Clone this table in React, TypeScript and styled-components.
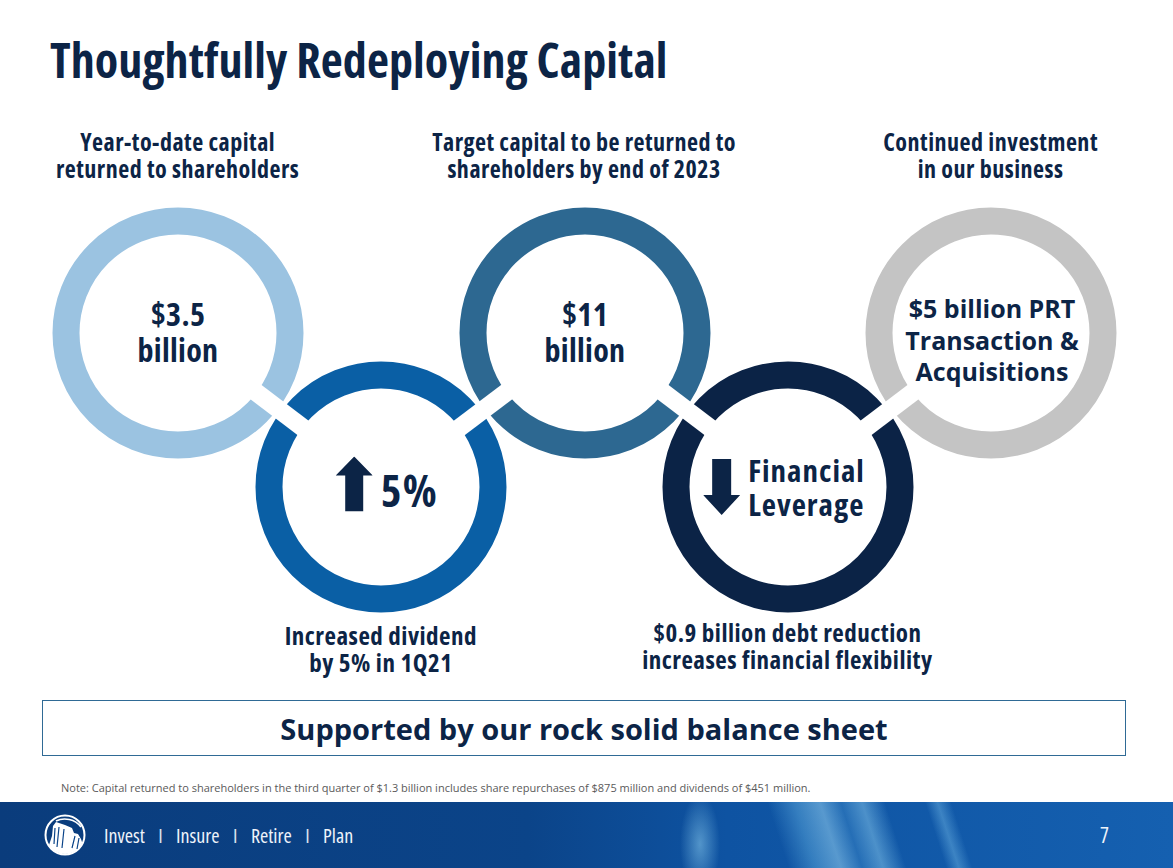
import React from 'react';
import styled, { createGlobalStyle } from 'styled-components';

const FONT = '"Open Sans", "DejaVu Sans Condensed", "Liberation Sans", sans-serif';
const NAVY = '#0c2446';

const GlobalStyle = createGlobalStyle`
  html, body {
    margin: 0;
    padding: 0;
    background: #ffffff;
  }
  body {
    font-family: ${FONT};
    font-stretch: 75%;
    font-variant-ligatures: none;
    color: ${NAVY};
  }
`;

// ring centres, in diagram coordinates (diagram starts at y = 203)
const rings = [
  { cx: 178, cy: 129, color: '#9bc3e1' },
  { cx: 381, cy: 283, color: '#0a5fa5' },
  { cx: 585, cy: 129, color: '#2d6891' },
  { cx: 788, cy: 283, color: '#0b2346' },
  { cx: 991, cy: 129, color: '#c4c4c4' },
];

const Page = styled.div`
  width: 1173px;
  height: 868px;
  display: flex;
  flex-direction: column;
  overflow: hidden;
`;

const Title = styled.h1`
  margin: 36px 0 0 0;
  padding-left: 50px;
  font-size: 48px;
  line-height: 48px;
  font-weight: 700;
  letter-spacing: 0.1px;
`;

const CaptionRow = styled.div<{ $top: number; $size: number }>`
  display: grid;
  grid-template-columns: repeat(5, 203.25px);
  padding-left: 76px;
  margin-top: ${(p) => p.$top}px;
  font-size: ${(p) => p.$size}px;
`;

const Caption = styled.div<{ $col: number; $shift?: number }>`
  grid-column: ${(p) => p.$col};
  grid-row: 1;
  display: flex;
  flex-direction: column;
  align-items: center;
  margin-top: ${(p) => p.$shift ?? 0}px;
  line-height: 27px;
  font-weight: 700;
  letter-spacing: 0.5px;
  white-space: nowrap;
  text-align: center;
`;

const Diagram = styled.div`
  position: relative;
  height: 410px;
  margin-top: 22px;
  flex-shrink: 0;
`;

const Rings = styled.svg`
  position: absolute;
  left: 0;
  top: 0;
`;

const Node = styled.div`
  position: absolute;
  transform: translate(-50%, -50%);
  display: flex;
  align-items: center;
  gap: 8px;
  white-space: nowrap;
`;

const Value = styled.div<{ $size: number; $lh: number; $stretch?: number; $track?: number }>`
  font-size: ${(p) => p.$size}px;
  line-height: ${(p) => p.$lh}px;
  font-stretch: ${(p) => p.$stretch ?? 75}%;
  letter-spacing: ${(p) => p.$track ?? 0}px;
  font-weight: 700;
  text-align: center;
`;

const LeftValue = styled(Value)`
  text-align: left;
`;

const Box = styled.div`
  margin: 24px 47px 0 42px;
  height: 54px;
  border: 1.5px solid #2f6a95;
  display: flex;
  align-items: center;
  justify-content: center;
  font-size: 29px;
  font-weight: 700;
  font-stretch: 88%;
`;

const Note = styled.div`
  margin-top: 25px;
  padding-left: 61px;
  font-size: 11px;
  line-height: 14px;
  font-stretch: 100%;
  color: #5a5a5a;
`;

const Footer = styled.footer`
  margin-top: auto;
  height: 66px;
  flex-shrink: 0;
  display: flex;
  align-items: center;
  padding: 0 64px 0 44px;
  color: #eef3fa;
  background:
    radial-gradient(ellipse 20px 50px at 700px 42px, rgba(150, 215, 245, 0.5), rgba(150, 215, 245, 0) 100%),
    linear-gradient(
      72deg,
      rgba(120, 200, 240, 0) 0px,
      rgba(120, 200, 240, 0) 750px,
      rgba(120, 200, 240, 0.35) 775px,
      rgba(160, 220, 248, 0.5) 800px,
      rgba(100, 180, 230, 0.25) 820px,
      rgba(150, 215, 245, 0.45) 840px,
      rgba(120, 200, 240, 0) 862px,
      rgba(120, 200, 240, 0) 900px,
      rgba(140, 210, 245, 0.35) 912px,
      rgba(120, 200, 240, 0) 925px
    ),
    linear-gradient(90deg, #0a3c7c 0%, #0b4489 45%, #0e53a2 62%, #1560b0 100%);
`;

const Logo = styled.svg`
  flex-shrink: 0;
`;

const Tagline = styled.div`
  margin-left: 18px;
  font-size: 20px;
  word-spacing: 3px;
`;

const Sep = styled.span`
  opacity: 0.9;
`;

const PageNo = styled.div`
  margin-left: auto;
  font-size: 21px;
`;

function UpArrow() {
  return (
    <svg width="37" height="55" viewBox="0 0 37 55" style={{ marginBottom: 10 }}>
      <polygon points="18.5,0 37,19 27.5,19 27.5,55 9.5,55 9.5,19 0,19" fill={NAVY} />
    </svg>
  );
}

function DownArrow() {
  return (
    <svg width="37" height="56" viewBox="0 0 37 56">
      <polygon points="9,0 28,0 28,36 37,36 18.5,56 0,36 9,36" fill={NAVY} />
    </svg>
  );
}

function RockLogo() {
  return (
    <Logo width="42" height="42" viewBox="0 0 42 42">
      <defs>
        <clipPath id="rockclip">
          <circle cx="21" cy="21" r="19" />
        </clipPath>
      </defs>
      <circle cx="21" cy="21" r="19.5" fill="none" stroke="#ffffff" strokeWidth="2" />
      <g clipPath="url(#rockclip)">
        <path
          d="M4 34 L8 22 L9 12 L12 8 L15 9 L21 11 L28 14 L30 19 L34 20 L37 25 L39 31 L42 42 L0 42 Z"
          fill="#ffffff"
        />
        <path
          d="M11 14 L10 30 M15 13 L13 33 M20 15 L18 34 M31 22 L28 34 M35 24 L33 35"
          stroke="#0b4489"
          strokeWidth="1.2"
          fill="none"
        />
      </g>
      <path d="M12 7 C20 3, 31 5, 37 13" stroke="#ffffff" strokeWidth="1.6" fill="none" />
    </Logo>
  );
}

const taglineWords = ['Invest', 'Insure', 'Retire', 'Plan'];

export default function App() {
  const lerp = (a: number, b: number, t: number) => a + (b - a) * t;
  return (
    <>
      <GlobalStyle />
      <Page>
        <Title>Thoughtfully Redeploying Capital</Title>

        <CaptionRow $top={44} $size={24}>
          <Caption $col={1}>
            <span>Year-to-date capital</span>
            <span>returned to shareholders</span>
          </Caption>
          <Caption $col={3}>
            <span>Target capital to be returned to</span>
            <span>shareholders by end of 2023</span>
          </Caption>
          <Caption $col={5}>
            <span>Continued investment</span>
            <span>in our business</span>
          </Caption>
        </CaptionRow>

        <Diagram>
          <Rings width="1173" height="410" viewBox="0 0 1173 410">
            {rings.map((r, i) => {
              const prev = rings[i - 1];
              return (
                <g key={i}>
                  <circle cx={r.cx} cy={r.cy} r={112} fill="none" stroke={r.color} strokeWidth={27} />
                  {prev && (
                    <line
                      x1={lerp(prev.cx, r.cx, 0.25)}
                      y1={lerp(prev.cy, r.cy, 0.25)}
                      x2={lerp(prev.cx, r.cx, 0.75)}
                      y2={lerp(prev.cy, r.cy, 0.75)}
                      stroke="#ffffff"
                      strokeWidth={18}
                    />
                  )}
                </g>
              );
            })}
          </Rings>

          <Node style={{ left: 178, top: 128 }}>
            <Value $size={32} $lh={36} $track={0.3}>
              $3.5
              <br />
              billion
            </Value>
          </Node>
          <Node style={{ left: 387, top: 285 }}>
            <UpArrow />
            <Value $size={44} $lh={46} $track={1.5}>5%</Value>
          </Node>
          <Node style={{ left: 784, top: 283 }}>
            <DownArrow />
            <LeftValue $size={31} $lh={34} $track={1}>
              Financial
              <br />
              Leverage
            </LeftValue>
          </Node>
          <Node style={{ left: 585, top: 128 }}>
            <Value $size={32} $lh={36} $track={0.3}>
              $11
              <br />
              billion
            </Value>
          </Node>
          <Node style={{ left: 992, top: 136 }}>
            <Value $size={25} $lh={31.5} $stretch={88}>
              $5 billion PRT
              <br />
              Transaction &amp;
              <br />
              Acquisitions
            </Value>
          </Node>
        </Diagram>

        <CaptionRow $top={8} $size={25}>
          <Caption $col={2}>
            <span>Increased dividend</span>
            <span>by 5% in 1Q21</span>
          </Caption>
          <Caption $col={4} $shift={-3}>
            <span>$0.9 billion debt reduction</span>
            <span>increases financial flexibility</span>
          </Caption>
        </CaptionRow>

        <Box>Supported by our rock solid balance sheet</Box>

        <Note>
          Note: Capital returned to shareholders in the third quarter of $1.3 billion includes share repurchases of
          $875 million and dividends of $451 million.
        </Note>

        <Footer>
          <RockLogo />
          <Tagline>
            {taglineWords.map((w, i) => (
              <React.Fragment key={w}>
                {i > 0 && <Sep>&nbsp; I &nbsp;</Sep>}
                {w}
              </React.Fragment>
            ))}
          </Tagline>
          <PageNo>7</PageNo>
        </Footer>
      </Page>
    </>
  );
}
